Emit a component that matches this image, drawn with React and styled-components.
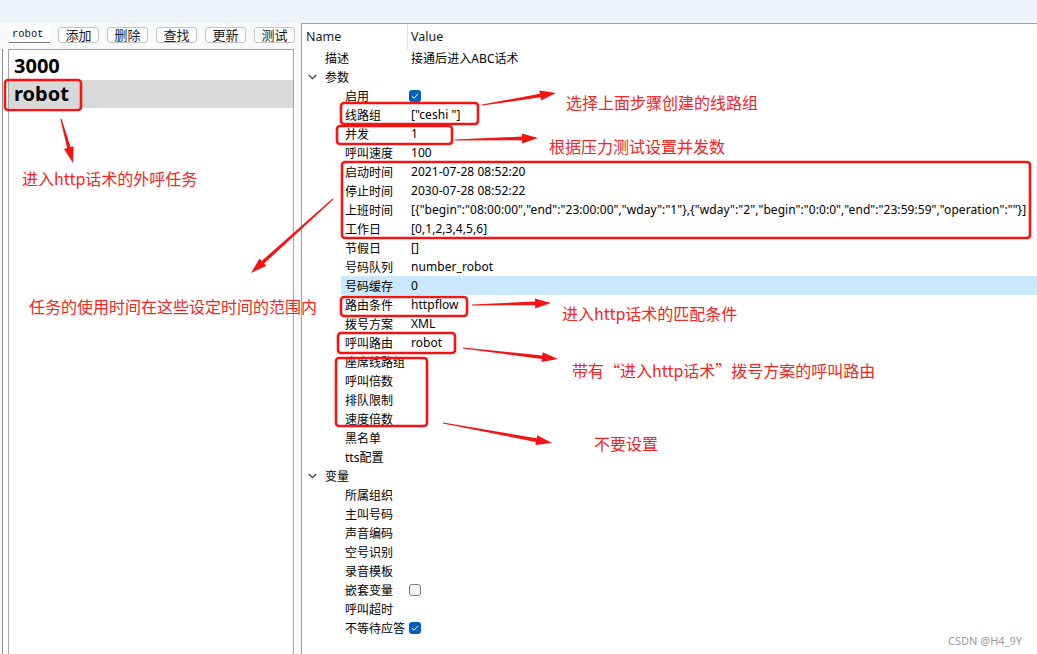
import React from 'react'
import styled, { createGlobalStyle } from 'styled-components'

const GlobalStyle = createGlobalStyle`
  html, body {
    margin: 0;
    padding: 0;
    background: #ffffff;
  }
  body {
    font-family: "Noto Sans", "Noto Sans CJK SC", sans-serif;
  }
`

const buttons = ['添加', '删除', '查找', '更新', '测试']

const tasks = [
  { name: '3000', selected: false },
  { name: 'robot', selected: true },
]

const rows = [
  { level: 0, name: '描述', value: '接通后进入ABC话术' },
  { level: 0, name: '参数', caret: true },
  { level: 1, name: '启用', check: true },
  { level: 1, name: '线路组', value: '["ceshi "]' },
  { level: 1, name: '并发', value: '1' },
  { level: 1, name: '呼叫速度', value: '100' },
  { level: 1, name: '启动时间', value: '2021-07-28 08:52:20' },
  { level: 1, name: '停止时间', value: '2030-07-28 08:52:22' },
  {
    level: 1,
    name: '上班时间',
    value:
      '[{"begin":"08:00:00","end":"23:00:00","wday":"1"},{"wday":"2","begin":"0:0:0","end":"23:59:59","operation":""}]',
  },
  { level: 1, name: '工作日', value: '[0,1,2,3,4,5,6]' },
  { level: 1, name: '节假日', value: '[]' },
  { level: 1, name: '号码队列', value: 'number_robot' },
  { level: 1, name: '号码缓存', value: '0', selected: true },
  { level: 1, name: '路由条件', value: 'httpflow' },
  { level: 1, name: '拨号方案', value: 'XML' },
  { level: 1, name: '呼叫路由', value: 'robot' },
  { level: 1, name: '座席线路组' },
  { level: 1, name: '呼叫倍数' },
  { level: 1, name: '排队限制' },
  { level: 1, name: '速度倍数' },
  { level: 1, name: '黑名单' },
  { level: 1, name: 'tts配置' },
  { level: 0, name: '变量', caret: true },
  { level: 1, name: '所属组织' },
  { level: 1, name: '主叫号码' },
  { level: 1, name: '声音编码' },
  { level: 1, name: '空号识别' },
  { level: 1, name: '录音模板' },
  { level: 1, name: '嵌套变量', check: false },
  { level: 1, name: '呼叫超时' },
  { level: 1, name: '不等待应答', check: true },
]

const boxes = [
  [5, 80, 76, 30],
  [341, 103, 137, 21],
  [337, 126, 115, 18],
  [342, 162, 688, 76],
  [341, 297, 126, 19],
  [338, 333, 117, 20],
  [336, 358, 91, 68],
]

const arrows = [
  [61, 119, 73, 163],
  [482, 105, 556, 93],
  [455, 140, 538, 138],
  [333, 199, 251, 273],
  [472, 305, 551, 303],
  [463, 348, 558, 359],
  [443, 423, 552, 443],
]

const notes = [
  { x: 22, y: 167, text: '进入http话术的外呼任务' },
  { x: 29, y: 295, text: '任务的使用时间在这些设定时间的范围内' },
  { x: 566, y: 91, text: '选择上面步骤创建的线路组' },
  { x: 549, y: 135, text: '根据压力测试设置并发数' },
  { x: 562, y: 302, text: '进入http话术的匹配条件' },
  { x: 572, y: 359, text: '带有“进入http话术”拨号方案的呼叫路由' },
  { x: 594, y: 432, text: '不要设置' },
]

function arrowPoints(x1, y1, x2, y2) {
  const dx = x2 - x1
  const dy = y2 - y1
  const len = Math.hypot(dx, dy)
  const ux = dx / len
  const uy = dy / len
  const nx = -uy
  const ny = ux
  const bx = x2 - ux * 16
  const by = y2 - uy * 16
  const p = (x, y, k) => `${(x + nx * k).toFixed(1)},${(y + ny * k).toFixed(1)}`
  return [
    p(x1, y1, 0.6),
    p(bx, by, 1.8),
    p(bx, by, 5),
    `${x2},${y2}`,
    p(bx, by, -5),
    p(bx, by, -1.8),
    p(x1, y1, -0.6),
  ].join(' ')
}

function Chevron() {
  return (
    <svg width="9" height="6" viewBox="0 0 9 6">
      <path d="M0.8 1 L4.5 4.7 L8.2 1" fill="none" stroke="#3a3a3a" strokeWidth="1.2" />
    </svg>
  )
}

function CheckBox({ checked }) {
  return (
    <Check $checked={checked}>
      {checked && (
        <svg width="8" height="6" viewBox="0 0 8 6">
          <path d="M0.8 3.2 L3 5.2 L7.2 0.9" fill="none" stroke="#ffffff" strokeWidth="1" />
        </svg>
      )}
    </Check>
  )
}

export default function App() {
  return (
    <>
      <GlobalStyle />
      <Frame>
        <TitleBand />
        <Main>
          <LeftPane>
            <Toolbar>
              <SearchInput>robot</SearchInput>
              {buttons.map(b => (
                <ToolButton key={b}>{b}</ToolButton>
              ))}
            </Toolbar>
            <ListWrap>
              <ListBox>
                {tasks.map(t => (
                  <TaskRow key={t.name} $selected={t.selected}>
                    {t.name}
                  </TaskRow>
                ))}
              </ListBox>
            </ListWrap>
          </LeftPane>

          <RightPane>
            <Header>
              <HeadName>Name</HeadName>
              <HeadValue>Value</HeadValue>
            </Header>
            {rows.map(r => (
              <Row key={r.name} $level={r.level}>
                <CaretSlot>{r.caret && <Chevron />}</CaretSlot>
                <Item $selected={r.selected}>
                  <NameText $level={r.level}>{r.name}</NameText>
                  <ValueText>
                    {r.check !== undefined ? <CheckBox checked={r.check} /> : r.value}
                  </ValueText>
                </Item>
              </Row>
            ))}
          </RightPane>
        </Main>

        <Marks width="1037" height="654" viewBox="0 0 1037 654">
          {boxes.map(([x, y, w, h], i) => (
            <rect
              key={i}
              x={x}
              y={y}
              width={w}
              height={h}
              rx="3"
              fill="none"
              stroke="#f41414"
              strokeWidth="2.6"
            />
          ))}
          {arrows.map((a, i) => (
            <polygon key={i} points={arrowPoints(...a)} fill="#f41414" />
          ))}
        </Marks>
        {notes.map(n => (
          <Note key={n.text} style={{ left: n.x, top: n.y }}>
            {n.text}
          </Note>
        ))}
        <Watermark>CSDN @H4_9Y</Watermark>
      </Frame>
    </>
  )
}

const Frame = styled.div`
  position: relative;
  width: 1037px;
  height: 654px;
  overflow: hidden;
  background: #f8f9fb;
  display: flex;
  flex-direction: column;
`

const TitleBand = styled.div`
  height: 23px;
  flex-shrink: 0;
  background: #eef2f9;
`

const Main = styled.div`
  flex: 1;
  min-height: 0;
  display: flex;
`

const LeftPane = styled.div`
  width: 296px;
  flex-shrink: 0;
  display: flex;
  flex-direction: column;
`

const Toolbar = styled.div`
  display: flex;
  align-items: center;
  gap: 8px;
  height: 18px;
  padding: 2px 0 0 9px;
`

const SearchInput = styled.div`
  width: 38px;
  height: 17px;
  padding-left: 3px;
  background: #ffffff;
  border-bottom: 1px solid #7a7a7a;
  font-family: "Liberation Mono", monospace;
  font-size: 10.5px;
  line-height: 18px;
  color: #111;
`

const ToolButton = styled.div`
  width: 39px;
  height: 14px;
  margin-top: 2px;
  border: 1px solid #c4c4c4;
  border-radius: 3px;
  background: #fdfdfd;
  font-family: "Noto Sans CJK SC", sans-serif;
  font-size: 13px;
  line-height: 14px;
  text-align: center;
  color: #1a1a1a;
`

const ListWrap = styled.div`
  flex: 1;
  margin: 6px 0 0 2px;
  padding: 0 2px 0 5px;
  border-left: 1px solid #8c8c8c;
  background: #ffffff;
  display: flex;
`

const ListBox = styled.div`
  flex: 1;
  border: 1px solid #a5a5a5;
  border-bottom: none;
  padding-top: 2px;
  background: #ffffff;
`

const TaskRow = styled.div`
  height: 28px;
  padding-left: 5px;
  font-family: "Noto Sans", sans-serif;
  font-weight: 700;
  font-size: 20px;
  line-height: 28px;
  color: #000;
  background: ${p => (p.$selected ? '#d9d9d9' : 'transparent')};
`

const RightPane = styled.div`
  flex: 1;
  margin-left: 5px;
  border-left: 1px solid #a0a0a0;
  border-top: 1px solid #a0a0a0;
  background: #ffffff;
  font-size: 12px;
  color: #000;
`

const Header = styled.div`
  display: grid;
  grid-template-columns: 106px 1fr;
  height: 24px;
  align-items: stretch;
`

const HeadName = styled.div`
  padding-left: 4px;
  line-height: 26px;
  font-size: 12.5px;
  border-right: 1px solid #e3e3e3;
  color: #1a1a1a;
`

const HeadValue = styled.div`
  padding-left: 3px;
  line-height: 26px;
  font-size: 12.5px;
  color: #1a1a1a;
`

const Row = styled.div`
  display: flex;
  height: 19px;
  padding-left: ${p => 6 + p.$level * 20}px;
`

const CaretSlot = styled.div`
  width: 17px;
  flex-shrink: 0;
  display: flex;
  align-items: center;
`

const Item = styled.div`
  flex: 1;
  display: flex;
  align-items: center;
  margin-left: -4px;
  padding-left: 4px;
  background: ${p => (p.$selected ? '#cce8ff' : 'transparent')};
`

const NameText = styled.div`
  width: ${p => 83 - p.$level * 20}px;
  flex-shrink: 0;
  white-space: nowrap;
`

const ValueText = styled.div`
  padding-left: 3px;
  white-space: nowrap;
  letter-spacing: 0.06px;
  display: flex;
  align-items: center;
`

const Check = styled.div`
  width: ${p => (p.$checked ? '12px' : '10px')};
  height: ${p => (p.$checked ? '12px' : '10px')};
  margin-left: -2px;
  border-radius: 3px;
  border: ${p => (p.$checked ? 'none' : '1px solid #7f7f7f')};
  background: ${p => (p.$checked ? '#005fb8' : '#f6f6f6')};
  display: flex;
  align-items: center;
  justify-content: center;
`

const Marks = styled.svg`
  position: absolute;
  left: 0;
  top: 0;
  pointer-events: none;
`

const Note = styled.div`
  position: absolute;
  font-family: "Noto Sans CJK SC", "Noto Sans", sans-serif;
  font-size: 16px;
  line-height: 22px;
  color: #f62323;
  white-space: nowrap;
`

const Watermark = styled.div`
  position: absolute;
  left: 948px;
  top: 633px;
  font-family: "Noto Sans", sans-serif;
  font-size: 11px;
  color: #9a9a9a;
`
